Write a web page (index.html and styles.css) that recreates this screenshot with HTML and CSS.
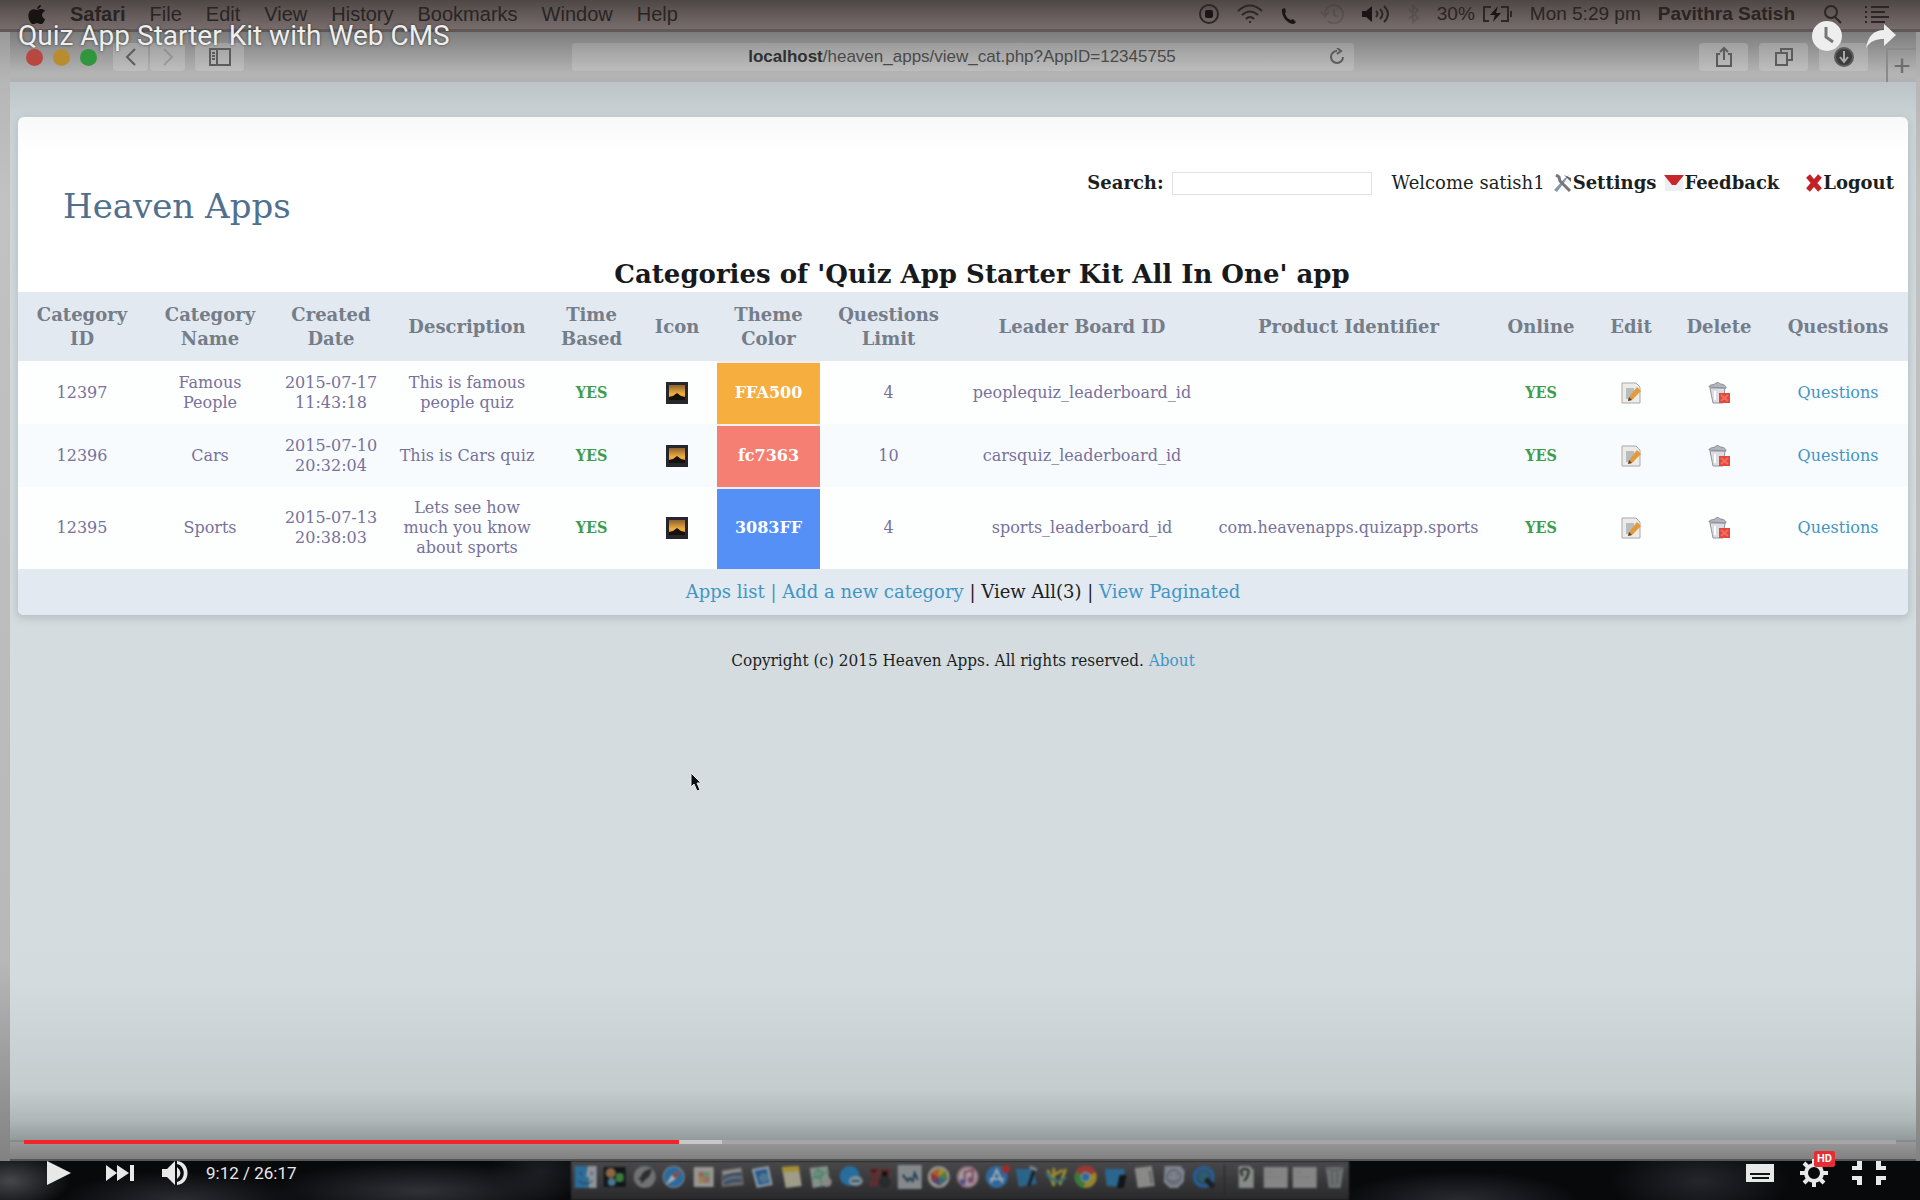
FILE: index.html
```html
<!DOCTYPE html>
<html lang="en">
<head>
<meta charset="utf-8">
<title>Quiz App Starter Kit with Web CMS</title>
<link rel="stylesheet" href="styles.css">
</head>
<body>
<svg class="defs" aria-hidden="true">
  <defs>
    <linearGradient id="sunset" x1="0" y1="0" x2="0" y2="1"><stop offset="0" stop-color="#8c6030"/><stop offset=".6" stop-color="#f0b040"/><stop offset="1" stop-color="#d88a20"/></linearGradient>
    <symbol id="photo" viewBox="0 0 22 22"><rect width="22" height="22" fill="#26262c"/><rect x="3" y="3" width="16" height="15" fill="url(#sunset)"/><path d="M3 18v-3l4-1 4-3 4 3 4 1v3z" fill="#15120e"/></symbol>
    <symbol id="edit" viewBox="0 0 22 22"><path d="M2 1h14l4 4v16H2z" fill="#ecebe8" stroke="#aaa9a6"/><path d="M6 6h8v11H6z" fill="#b9bcc0"/><path d="M17 5l4 4-9 9-4 1 1-4z" fill="#e39a3c"/><path d="M8 19l1-4 3 3z" fill="#4a4440"/></symbol>
    <symbol id="trash" viewBox="0 0 24 22"><path d="M3 6h15l-2 15H6z" fill="#dcdde2" stroke="#92949e"/><path d="M2 5c0-2 3-2 6-3 1-2 4-2 5 0 4 0 6 2 6 4z" fill="#b3b5bf" stroke="#8a8c96"/><path d="M8 9v9" stroke="#fff" stroke-width="2"/><rect x="12" y="11" width="11" height="10" fill="#e2483c"/><path d="M14 13l7 6m0-6l-7 6" stroke="#f0705f" stroke-width="2"/></symbol>
  </defs>
</svg>
<div class="player">
  <div class="video">
    <header class="menubar">
      <nav class="menus">
        <svg class="apple" viewBox="0 0 18 20"><path d="M13 1c-2 0-4 2-4 4 2 0 4-2 4-4zM9 6C7 5 5 5 3 6c-4 3-3 9 0 13 2 2 3 1 6 0 3 1 4 2 6 0 1-1 2-3 2-4-4-2-4-6 0-8-2-3-6-2-8-1z"/></svg>
        <button class="app">Safari</button><button>File</button><button>Edit</button><button>View</button><button>History</button><button>Bookmarks</button><button>Window</button><button>Help</button>
      </nav>
      <div class="status">
        <svg width="20" height="20" viewBox="0 0 20 20"><circle cx="10" cy="10" r="9"/><rect class="fill" x="6" y="6" width="8" height="8" rx="2"/></svg>
        <svg width="28" height="20" viewBox="0 0 28 20"><path d="M2 7q12-11 24 0M6 11q8-7 16 0M10 15q4-4 8 0"/><circle class="fill" cx="14" cy="18" r="1"/></svg>
        <svg width="22" height="20" viewBox="0 0 22 20"><path class="fill" d="M1 5l3-1 1 4-1 1c1 4 3 6 6 7l2-1 3 3-2 2C6 20 0 12 1 5z"/></svg>
        <svg class="faint" width="24" height="20" viewBox="0 0 24 20"><path d="M5 10a9 9 0 1 1 3 7M1 8l4 4 4-4M14 5v6l4 2"/></svg>
        <svg width="30" height="20" viewBox="0 0 30 20"><path class="fill" d="M1 7h4l6-5v16l-6-5H1z"/><path d="M15 7q3 3 0 6M19 5q5 5 0 10M23 2q8 8 0 16"/></svg>
        <svg class="faint" width="12" height="20" viewBox="0 0 12 20"><path d="M1 5l9 9-5 4V2l5 4-9 9"/></svg>
        <span class="battery">30% <svg width="32" height="18" viewBox="0 0 32 18"><path d="M10 2H3v14h5M20 2h7v14h-7M30 6v6"/><path class="fill" d="M17 1l-8 9h5l-2 7 8-9h-5z"/></svg></span>
        <span class="clock">Mon 5:29 pm</span>
        <b>Pavithra Satish</b>
        <svg class="magnifier" width="20" height="20" viewBox="0 0 20 20"><circle cx="8" cy="8" r="6"/><path d="M12 13l6 6"/></svg>
        <svg width="26" height="18" viewBox="0 0 26 18"><path d="M1 2h2M7 2h18M1 7h2M7 7h14M1 12h2M7 12h18M1 17h2M7 17h14"/></svg>
      </div>
    </header>
    <div class="window">
      <div class="toolbar">
        <div class="lights"><i class="red"></i><i class="amber"></i><i class="green"></i></div>
        <div class="history">
          <button aria-label="Back"><svg width="12" height="18" viewBox="0 0 12 18"><path d="M10 1L2 9l8 8"/></svg></button>
          <button aria-label="Forward" class="off"><svg width="12" height="18" viewBox="0 0 12 18"><path d="M2 1l8 8-8 8"/></svg></button>
        </div>
        <button aria-label="Sidebar" class="tool"><svg width="22" height="18" viewBox="0 0 22 18"><path d="M1 1h20v16H1zM8 1v16M3 5h3M3 8h3M3 11h3"/></svg></button>
        <div class="address"><span class="url"><b>localhost</b>/heaven_apps/view_cat.php?AppID=12345755</span><svg width="18" height="18" viewBox="0 0 18 18"><path d="M15 9a6 6 0 1 1-6-6M9 0l4 3-4 3"/></svg></div>
        <div class="actions">
          <button aria-label="Share page" class="tool"><svg width="18" height="22" viewBox="0 0 18 22"><path d="M5 8H2v12h14V8h-3M9 14V2M5 6l4-4 4 4"/></svg></button>
          <button aria-label="Tabs" class="tool"><svg width="20" height="20" viewBox="0 0 20 20"><path d="M7 5V2h11v11h-4M2 6h11v12H2z"/></svg></button>
          <button aria-label="Downloads" class="tool"><svg width="20" height="20" viewBox="0 0 20 20"><circle cx="10" cy="10" r="9" fill="#3c3c3c"/><path d="M10 4v10M6 10l4 5 4-5" stroke="#aaa"/></svg></button>
        </div>
        <button aria-label="New tab" class="newtab">+</button>
      </div>
      <main class="page">
        <section class="card">
          <header class="top">
            <h1>Heaven Apps</h1>
            <div class="tools">
              <label for="q">Search:</label><input id="q" type="text">
              <span class="welcome">Welcome satish1</span>
              <a class="settings" href="#"><svg width="20" height="20" viewBox="0 0 20 20"><path d="M16 2l-3 5L4 19l-3-2L11 6z" fill="#8597ad"/><path d="M3 2l3 2 1 4 10 10" fill="none" stroke="#77777b" stroke-width="3"/><path d="M11 2l7 3v4z" fill="#66676b"/></svg>Settings</a>
              <a class="feedback" href="#"><svg width="20" height="20" viewBox="0 0 20 20"><path d="M1 2h18v16H1z" fill="#eceef2"/><path d="M0 2h20l-8 10h-4z" fill="#c9252c"/></svg>Feedback</a>
              <a class="logout" href="#"><svg width="18" height="18" viewBox="0 0 18 18"><path d="M3 2l12 14M15 2L3 16" stroke="#c42127" stroke-width="5"/></svg>Logout</a>
            </div>
          </header>
          <h2>Categories of 'Quiz App Starter Kit All In One' app</h2>
          <table>
            <colgroup><col class="c-id"><col class="c-id"><col class="c-date"><col class="c-desc"><col class="c-time"><col class="c-icon"><col class="c-theme"><col class="c-limit"><col class="c-board"><col class="c-product"><col class="c-online"><col class="c-edit"><col class="c-delete"><col class="c-questions"></colgroup>
            <thead><tr><th>Category<br>ID</th><th>Category<br>Name</th><th>Created<br>Date</th><th>Description</th><th>Time<br>Based</th><th>Icon</th><th>Theme<br>Color</th><th>Questions<br>Limit</th><th>Leader Board ID</th><th>Product Identifier</th><th>Online</th><th>Edit</th><th>Delete</th><th>Questions</th></tr></thead>
            <tbody>
              <tr><td>12397</td><td>Famous<br>People</td><td>2015-07-17<br>11:43:18</td><td>This is famous<br>people quiz</td><td class="yes">YES</td><td><svg class="ico"><use href="#photo"/></svg></td><td class="theme orange">FFA500</td><td>4</td><td>peoplequiz_leaderboard_id</td><td></td><td class="yes">YES</td><td><a href="#" aria-label="Edit"><svg class="ico"><use href="#edit"/></svg></a></td><td><a href="#" aria-label="Delete"><svg class="ico"><use href="#trash"/></svg></a></td><td><a href="#">Questions</a></td></tr>
              <tr><td>12396</td><td>Cars</td><td>2015-07-10<br>20:32:04</td><td>This is Cars quiz</td><td class="yes">YES</td><td><svg class="ico"><use href="#photo"/></svg></td><td class="theme coral">fc7363</td><td>10</td><td>carsquiz_leaderboard_id</td><td></td><td class="yes">YES</td><td><a href="#" aria-label="Edit"><svg class="ico"><use href="#edit"/></svg></a></td><td><a href="#" aria-label="Delete"><svg class="ico"><use href="#trash"/></svg></a></td><td><a href="#">Questions</a></td></tr>
              <tr><td>12395</td><td>Sports</td><td>2015-07-13<br>20:38:03</td><td>Lets see how<br>much you know<br>about sports</td><td class="yes">YES</td><td><svg class="ico"><use href="#photo"/></svg></td><td class="theme blue">3083FF</td><td>4</td><td>sports_leaderboard_id</td><td>com.heavenapps.quizapp.sports</td><td class="yes">YES</td><td><a href="#" aria-label="Edit"><svg class="ico"><use href="#edit"/></svg></a></td><td><a href="#" aria-label="Delete"><svg class="ico"><use href="#trash"/></svg></a></td><td><a href="#">Questions</a></td></tr>
            </tbody>
          </table>
          <footer class="links"><a href="#">Apps list</a> <span class="sep">|</span> <a href="#">Add a new category</a> | View All(3) | <a href="#">View Paginated</a></footer>
        </section>
        <p class="copyright">Copyright (c) 2015 Heaven Apps. All rights reserved. <a href="#">About</a></p>
      </main>
      <div class="statusbar"></div>
    </div>
    <div class="desktop">
      <div class="dock">
        <svg viewBox="0 0 24 24"><path d="M1 1h13l-2 11h3v11H1z" fill="#2b6c98"/><path d="M14 1h9v22h-8V12h-3z" fill="#8d949a"/><path d="M5 16q7 5 14 0M7 7v3M18 7v3" stroke="#26384a" fill="none"/></svg>
        <svg viewBox="0 0 24 24"><path d="M1 2h22v20H1z" fill="#11161a"/><circle cx="8" cy="8" r="5" fill="#8e6642"/><circle cx="9" cy="17" r="4" fill="#47788e"/><rect x="13" y="8" width="8" height="9" rx="3" fill="#397b3d"/></svg>
        <svg viewBox="0 0 24 24"><circle cx="12" cy="12" r="11" fill="#707273"/><path d="M19 4q-8 0-11 8l-3 2 3 1 1 4 3-4q6-3 7-11z" fill="#2c2d2f"/></svg>
        <svg viewBox="0 0 24 24"><circle cx="12" cy="12" r="11" fill="#7a8790"/><circle cx="12" cy="12" r="10" fill="#296a9f"/><path d="M20 4l-6 10-10 6 6-10z" fill="#b5b1ae"/><path d="M20 4l-6 10-4-4z" fill="#8c4641"/></svg>
        <svg viewBox="0 0 24 24"><rect x="2" y="2" width="20" height="20" rx="1" fill="#989691"/><path d="M7 7h5v5H7z" fill="#97635d"/><path d="M12 7h6v5h-6z" fill="#668f68"/><path d="M7 12h5v6H7z" fill="#998250"/><path d="M12 12h6v6h-6z" fill="#956d65"/></svg>
        <svg viewBox="0 0 24 24"><path d="M1 5l20-3 2 18-22 2z" fill="#6e6a64"/><path d="M2 12q9-5 19-4v3q-10-2-19 4zM3 17q9-4 18-3v3q-8-1-17 3z" fill="#314e76"/><path d="M2 8l18-3" stroke="#9d9b95" stroke-width="2"/></svg>
        <svg viewBox="0 0 24 24"><path d="M1 4l17-3 4 19-16 3z" fill="#8799a7"/><path d="M4 6l12-2 3 14-11 2z" fill="#27588e"/><circle cx="13" cy="13" r="5" fill="#4d7590"/></svg>
        <svg viewBox="0 0 24 24"><path d="M2 2l17-1 3 20-16 2z" fill="#9f9d88"/><path d="M2 2l17-1 1 5-17 1z" fill="#a58e31"/></svg>
        <svg viewBox="0 0 24 24"><path d="M1 3l18-2 2 19-17 3z" fill="#83918a"/><path d="M3 14l17-8M9 3l4 18" stroke="#5c8c6c" stroke-width="2"/><circle cx="10" cy="9" r="4" fill="none" stroke="#397a6b"/><circle cx="18" cy="17" r="5" fill="#878989"/></svg>
        <svg viewBox="0 0 24 24"><circle cx="11" cy="11" r="10" fill="#276d9e"/><ellipse cx="17" cy="16" rx="7" ry="5" fill="#7e929d"/><path d="M13 16h8" stroke="#3b4c59" stroke-width="2"/></svg>
        <svg viewBox="0 0 24 24"><path d="M2 3h9v18H1l1-5h5v-4H2zM13 3h9v12h-9z" fill="#612c2f"/><path d="M4 6h4M15 7h4v4h-4z" stroke="#20191b" stroke-width="2"/><circle cx="17" cy="17" r="6" fill="#292a2c"/></svg>
        <svg viewBox="0 0 24 24"><rect width="24" height="24" rx="1" fill="#85898c"/><path d="M5 10l5 6 2-3 3 3 2-8 3 7" fill="none" stroke="#223f4e" stroke-width="2"/></svg>
        <svg viewBox="0 0 24 24"><circle cx="12" cy="12" r="11" fill="#93918b"/><path d="M12 12V3l7 3z" fill="#9c8c34"/><path d="M12 12l7-6 2 8z" fill="#587a38"/><path d="M12 12l9 2-8 7z" fill="#356b75"/><path d="M12 12l1 9-8-5z" fill="#58416b"/><path d="M12 12l-7 4-1-8z" fill="#8e3137"/><path d="M12 12L4 8l8-5z" fill="#a95b28"/></svg>
        <svg viewBox="0 0 24 24"><circle cx="12" cy="12" r="11" fill="#8d6f7c"/><circle cx="12" cy="12" r="9" fill="#9f9a9e"/><path d="M9 17V7l8-2v10" stroke="#864862" stroke-width="2" fill="none"/><circle cx="7" cy="17" r="3" fill="#5b518a"/><circle cx="15" cy="15" r="3" fill="#804c69"/></svg>
        <svg viewBox="0 0 24 24"><circle cx="11" cy="12" r="11" fill="#31679b"/><path d="M5 18l6-13 6 13M4 14h14" stroke="#9cabb6" stroke-width="2" fill="none"/><circle cx="20" cy="4" r="4" fill="#9d2c28"/></svg>
        <svg viewBox="0 0 24 24"><path d="M1 4h17l4 15-18 3z" fill="#2c6489"/><path d="M20 3l-6 18" stroke="#172027" stroke-width="3"/><path d="M15 2l7 3" stroke="#7f8589" stroke-width="3"/></svg>
        <svg viewBox="0 0 24 24"><path d="M3 5l6 15M9 3v18M21 4l-6 16M4 13l14-8" stroke="#9a8b31" stroke-width="3"/><path d="M2 8q9 14 19 4" stroke="#38727a" stroke-width="3" fill="none"/></svg>
        <svg viewBox="0 0 24 24"><circle cx="12" cy="12" r="11" fill="#97842e"/><path d="M12 12L2 7a11 11 0 0 1 20 0z" fill="#963a32"/><path d="M12 12L2 7a11 11 0 0 0 8 16z" fill="#3b793e"/><circle cx="12" cy="12" r="5" fill="#a3a9aa"/><circle cx="12" cy="12" r="4" fill="#2e689c"/></svg>
        <svg viewBox="0 0 24 24"><path d="M1 4h20l-2 18-16-1z" fill="#2b668e"/><path d="M16 10h7l-3 13h-7z" fill="#131619"/></svg>
        <svg viewBox="0 0 24 24"><path d="M2 3l17-2 3 20-17 2z" fill="#898987"/><path d="M17 6l2 13" stroke="#626260" stroke-width="2"/></svg>
        <svg viewBox="0 0 24 24"><path d="M3 1h16l4 5-1 11-6 6H8l-6-6z" fill="#7d828b"/><circle cx="12" cy="12" r="7" fill="none" stroke="#454b5b"/><path d="M8 10h2M14 10h2M7 14q5 5 10 0" fill="none" stroke="#454b5b"/></svg>
        <svg viewBox="0 0 24 24"><circle cx="12" cy="12" r="9" fill="none" stroke="#285c91" stroke-width="4"/><circle cx="12" cy="12" r="6" fill="#2d5c70"/><path d="M14 14l8 8" stroke="#1c2025" stroke-width="5"/></svg>
        <hr>
        <svg viewBox="0 0 24 24"><path d="M5 1h11l4 4v18H5z" fill="#888a88"/><path d="M9 11q-4-7 2-7t3 6q-2 6-4 5" fill="none" stroke="#202322" stroke-width="2"/></svg>
        <svg viewBox="0 0 24 24"><path d="M0 2h24v21H0z" fill="#858585"/><path d="M3 7h6M3 12h14" stroke="#777"/></svg>
        <svg viewBox="0 0 24 24"><path d="M0 2h24v21H0z" fill="#858585"/><path d="M3 7h6M3 12h14" stroke="#777"/></svg>
        <svg viewBox="0 0 24 24"><path d="M3 2h18l-3 21H6z" fill="#6d7172"/><path d="M4 3q8 5 16 0M9 7l1 13M15 7l-1 13" stroke="#4a4e50" fill="none"/></svg>
      </div>
    </div>
    <svg class="cursor" width="12" height="20" viewBox="0 0 12 20"><path d="M1 1v14l3-3 3 7 3-1-3-7h4z" fill="#0b0d0e" stroke="#e4eaec"/></svg>
  </div>
  <div class="overlay">
    <div class="headline">
      <a href="#">Quiz App Starter Kit with Web CMS</a>
      <button aria-label="Watch later"><svg width="32" height="32" viewBox="0 0 32 32"><circle cx="16" cy="16" r="15" fill="#eee"/><path d="M15 7v10l7 5" fill="none" stroke="#777" stroke-width="3"/></svg></button>
      <button aria-label="Share"><svg width="32" height="28" viewBox="0 0 32 28"><path d="M19 2l12 11-12 11v-7C11 17 5 19 1 26 3 14 9 8 19 8z" fill="#eee"/></svg></button>
    </div>
    <div class="chrome">
      <input class="seek" type="range" aria-label="Seek" min="0" max="1577" value="552">
      <div class="controls">
        <button aria-label="Play"><svg width="24" height="24" viewBox="0 0 24 24"><path d="M0 0l24 12L0 24z"/></svg></button>
        <button aria-label="Next"><svg width="28" height="18" viewBox="0 0 28 18"><path d="M0 1l11 8L0 17zM11 1l12 8-12 8zM24 1h4v16h-4z"/></svg></button>
        <button aria-label="Mute"><svg width="26" height="26" viewBox="0 0 26 26"><path d="M0 9h5l8-8v24l-8-8H0zM15 7q7 6 0 12zM15 1c14 1 14 23 0 24v-3c9-2 9-16 0-18z"/></svg></button>
        <span class="time">9:12 / 26:17</span>
        <span class="right">
          <button aria-label="Subtitles"><svg width="28" height="18" viewBox="0 0 28 18"><path d="M0 0h28v18H0z"/><path d="M4 10h20M6 14h17" stroke="#111" stroke-width="2"/></svg></button>
          <button aria-label="Settings" class="gear"><svg width="28" height="28" viewBox="0 0 28 28"><circle cx="14" cy="14" r="8" fill="none" stroke="#e8e8e8" stroke-width="4"/><path d="M14 0v5M14 23v5M0 14h5M23 14h5M4 4l4 4M20 20l4 4M24 4l-4 4M8 20l-4 4" stroke="#e8e8e8" stroke-width="4"/></svg><span class="hd">HD</span></button>
          <button aria-label="Exit full screen"><svg width="34" height="24" viewBox="0 0 34 24"><path d="M5 0h5v9H0V5h5zM24 0h5v5h5v4H24zM0 15h10v9H5v-5H0zM24 15h10v4h-5v5h-5z"/></svg></button>
        </span>
      </div>
    </div>
  </div>
</div>
</body>
</html>
```
FILE: styles.css
```css
* { box-sizing: border-box; }
body { margin: 0; background: #0b0c0f; }
button { border: 0; padding: 0; background: none; font: inherit; color: inherit; display: flex; align-items: center; justify-content: center; }
a { color: #4195c5; text-decoration: none; }
h1, h2, p { margin: 0; font-weight: normal; }
.defs { position: absolute; width: 0; height: 0; }

.player { position: relative; min-height: 100vh; display: flex; }
.video { position: relative; flex: 1; min-width: 0; display: flex; flex-direction: column; background: linear-gradient(#858585, #b6b6b6 80px, #c2c2c2 200px, #b8b8b8 80%, #777); }

/* Mac menu bar */
.menubar { height: 32px; flex: none; display: flex; justify-content: space-between; align-items: center; padding: 0 30px 2px 28px; border-bottom: 3px solid #5f5857; background: linear-gradient(#4e4746, #786d6c); color: #2a2424; font: 19px/26px "Liberation Sans", Arial, sans-serif; }
.menus, .status { display: flex; align-items: center; gap: 24px; }
.menus { font-size: 20px; }
.app { font-weight: bold; }
.apple { width: 18px; height: 20px; fill: #181414; }
.status { gap: 17px; }
.status span, .status b { white-space: nowrap; }
.status svg { fill: none; stroke: #2d2626; stroke-width: 2; flex: none; }
.status .fill { fill: #1b1515; stroke: none; }
.status .faint { opacity: .2; }
.status .magnifier { margin: 0 4px 0 11px; }
.battery { display: flex; align-items: center; gap: 6px; }

/* Browser window */
.window { flex: 1; display: flex; flex-direction: column; margin: 0 4px 0 10px; }
.toolbar { height: 50px; flex: none; display: flex; align-items: center; padding: 0 0 0 16px; background: linear-gradient(#7c7c7c, #b5b5b5 42px, #b1b1b1); color: #4a4a4a; }
.toolbar svg { fill: none; stroke: #5c5c5c; stroke-width: 2; }
.lights { display: flex; gap: 10px; margin-right: 16px; }
.lights i { width: 17px; height: 17px; border-radius: 50%; }
.red { background: #b8473f; }
.amber { background: #ba8c30; }
.green { background: #2f963c; }
.history { display: flex; gap: 2px; margin-right: 10px; }
.history button, .tool { height: 28px; border-radius: 4px; background: linear-gradient(#a0a0a0, #bebebe); }
.history button { width: 35px; }
.off svg { opacity: .3; }
.tool { width: 49px; }
.address { flex: 1; min-width: 0; height: 28px; margin: 0 345px 0 328px; padding: 0 8px 0 24px; border-radius: 4px; background: linear-gradient(#9b9b9b, #bdbdbd); display: flex; align-items: center; font: 17px/28px "Liberation Sans", Arial, sans-serif; }
.address b { color: #303030; }
.url { flex: 1; text-align: center; }
.actions { display: flex; gap: 11px; margin-right: 18px; }
.newtab { width: 30px; height: 34px; align-self: flex-end; border: 2px solid #8a8a8a; border-width: 2px 0 0 2px; font: 30px/30px "Liberation Sans", Arial, sans-serif; color: #6d6d6d; }

/* Web page */
.page { flex: 1; padding: 35px 8px 20px; background: linear-gradient(to top, #939a9b, #afb7b9 20px, #c4ccce 50px, #d3dbde 160px, transparent 200px), linear-gradient(#bcc4c7, #c9d2d5 35px, #d4dcdf 300px); color: #1c1f22; font: 16px/20px "DejaVu Serif", serif; }
.card { overflow: hidden; border-radius: 6px; background: linear-gradient(#f9f9f9, #fff 40px); box-shadow: 0 2px 6px 3px #bdc7ca; }
.top { display: flex; justify-content: space-between; align-items: flex-start; height: 139px; padding: 54px 14px 0 45px; }
h1 { margin-top: 15px; font-size: 34px; line-height: 40px; color: #50708f; }
.tools { display: flex; align-items: center; height: 24px; font-size: 18px; white-space: nowrap; }
.tools a { display: flex; align-items: center; color: #1c1f22; font-weight: bold; }
.tools label { font-weight: bold; }
.tools input { width: 200px; height: 23px; margin: 0 20px 0 8px; border: 1px solid #e2e2e2; background: #fff; }
.tools .settings { margin: 0 8px; }
.tools .logout { margin-left: 26px; }
h2 { padding-left: 38px; text-align: center; font-size: 26px; font-weight: bold; line-height: 36px; color: #17191c; }
table { width: 100%; table-layout: fixed; border-collapse: collapse; text-align: center; color: #77719c; }
.c-id { width: 128px; }
.c-date { width: 114px; }
.c-desc { width: 158px; }
.c-time { width: 91px; }
.c-icon { width: 80px; }
.c-theme { width: 103px; }
.c-limit { width: 137px; }
.c-board { width: 250px; }
.c-product { width: 283px; }
.c-online { width: 102px; }
.c-edit { width: 78px; }
.c-delete { width: 98px; }
.c-questions { width: 140px; }
th, td { padding: 0; white-space: nowrap; }
thead tr { height: 69px; background: #e2e9f1; }
th { font-size: 18px; line-height: 24px; color: #757d89; }
tbody tr { height: 63px; background: #fdfefe; }
tbody tr:nth-child(2) { background: #f8fbfe; }
tbody tr:nth-child(3) { height: 82px; }
.ico { width: 24px; height: 22px; display: block; margin: 0 auto; }
.yes { color: #3f9c4e; font-family: "DejaVu Serif Condensed", "DejaVu Serif", serif; font-weight: bold; }
.theme { color: #fff; font-weight: bold; box-shadow: inset 0 2px #f3eef4; }
.orange { background: #f6ae3e; }
.coral { background: #f47f72; }
.blue { background: #5590f7; }
.links { height: 46px; text-align: center; background: #e2e9f1; font-size: 18px; line-height: 46px; }
.sep { color: #4195c5; }
.copyright { margin-top: 34px; text-align: center; font-family: "DejaVu Serif Condensed", "DejaVu Serif", serif; font-size: 17px; line-height: 22px; }
.statusbar { height: 21px; border-top: 2px solid #868a8b; border-bottom: 2px solid #555; background: linear-gradient(#989898, #818181); }

/* Desktop and dock */
.desktop { height: 39px; flex: none; display: flex; justify-content: center; background: radial-gradient(60px 30px at 10px 20px, #46474b, transparent), radial-gradient(120px 30px at 180px 40px, #2c2d33, transparent), radial-gradient(150px 30px at 420px 30px, #303137, transparent), radial-gradient(50px 30px at 540px 10px, #1d1e23, transparent), radial-gradient(120px 30px at 1460px 40px, #2a2c33, transparent), radial-gradient(90px 40px at 1700px 20px, #24262c, transparent), #08090b; }
.dock { width: 778px; display: flex; align-items: flex-start; padding-top: 4px; background: linear-gradient(#49494b, #29292b); filter: blur(1px); }
.dock svg { flex: 1; min-width: 0; height: 24px; }
.dock hr { width: 1px; height: 30px; margin: 0 6px; border: 0; background: #222; }
.cursor { position: absolute; left: 690px; top: 772px; }

/* Player chrome over the video */
.overlay { position: absolute; inset: 0; display: flex; flex-direction: column; justify-content: space-between; color: #e8e8e8; font-family: Roboto, sans-serif; }
.overlay svg { display: block; fill: #e8e8e8; }
.headline { display: flex; align-items: center; gap: 22px; padding: 18px 23px 0 18px; }
.headline a { flex: 1; color: #eee; font-size: 28px; line-height: 36px; text-shadow: 0 0 3px rgba(0, 0, 0, .6); }
.seek { appearance: none; display: block; width: calc(100% - 48px); height: 4px; margin: 0 24px; background: linear-gradient(90deg, #f1242c 35%, #c8c8c8 35% 37.3%, #a6a6a6 37.3%); }
.seek::-webkit-slider-thumb { appearance: none; width: 0; height: 0; }
.controls { height: 56px; display: flex; align-items: center; padding: 2px 34px 0 47px; }
.controls button + button { margin-left: 35px; }
.controls button:nth-of-type(3) { margin-left: 28px; }
.time { margin-left: 18px; font-size: 17px; }
.right { display: flex; align-items: center; margin-left: auto; }
.right button:nth-of-type(2) { margin-left: 26px; }
.right button:nth-of-type(3) { margin-left: 24px; }
.gear { position: relative; }
.hd { position: absolute; left: 14px; top: -8px; padding: 0 3px; border-radius: 2px; background: #e52d33; color: #fff; font: bold 11px/16px Roboto, sans-serif; }
```
